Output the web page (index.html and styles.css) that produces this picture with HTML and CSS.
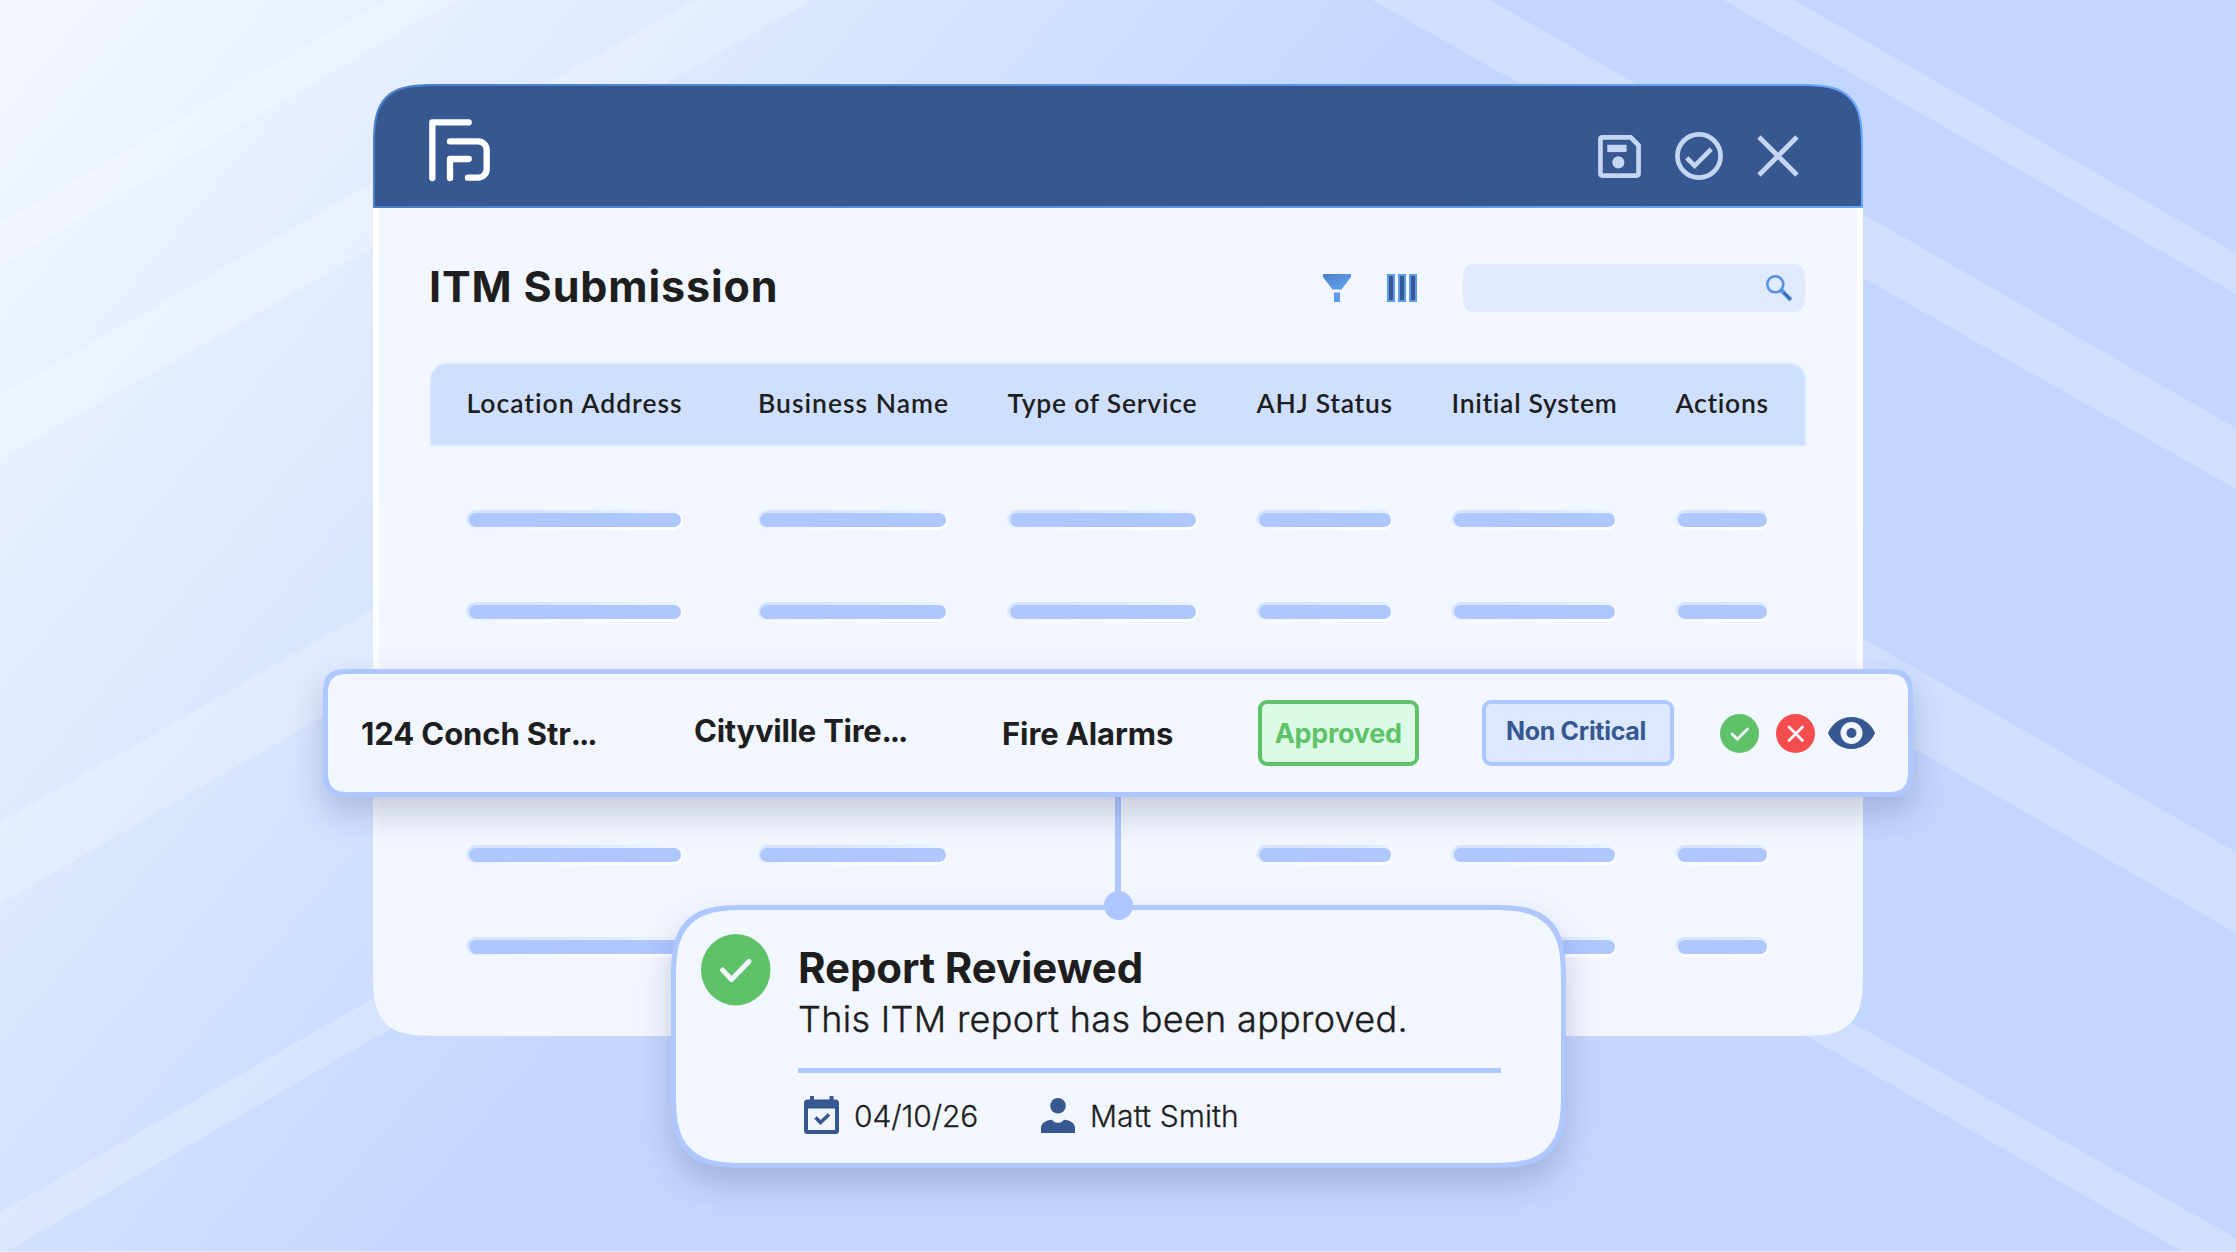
FILE: index.html
```html
<!DOCTYPE html>
<html lang="en">
<head>
<meta charset="utf-8">
<title>ITM Submission</title>
<link rel="stylesheet" href="styles.css">
</head>
<body>
<div class="stage">
  <svg class="stripes" viewBox="0 0 2236 1252" aria-hidden="true">
    <path d="M385 0H456L0 266V224ZM694 0H813L0 459V395ZM0 822L420 582V660L0 904ZM0 1212L440 960V1000L0 1255Z"/>
    <path d="M1372 0H1490L2236 428V489ZM1723 0H1794L2236 253V294ZM1800 602L2236 852V933L1800 683ZM1780 982L2236 1238V1252H2183L1780 1021Z"/>
  </svg>

  <main class="window">
    <header class="topbar">
      <svg class="logo" viewBox="208 147 182 186"><path d="M218 324V157H327M271 214H355A26 26 0 0 1 381 240V297A26 26 0 0 1 355 323H325M271 324V267H327"/></svg>
      <div class="topbar-actions">
        <svg class="icon-save" viewBox="0 0 44 44"><path class="line" d="M4.600 2.500H33.500L41.500 10.500V39.400Q41.500 41.500 39.400 41.500H4.600Q2.500 41.500 2.500 39.400V4.600Q2.500 2.500 4.600 2.500Z"/><path class="solid" d="M9.500 10H29.200V17.500H9.500Z"/><circle class="solid" cx="20.800" cy="28" r="6.200"/></svg>
        <svg class="icon-ok" viewBox="0 0 49 49"><circle class="line" cx="24.500" cy="24.500" r="22"/><path class="line" d="M12 26.500L20 34.500L37 17.500"/></svg>
        <svg class="icon-close" viewBox="0 0 42 42"><path class="line" d="M2 2L40 40M40 2L2 40"/></svg>
      </div>
    </header>

    <section class="body">
      <div class="toolbar">
        <h1 class="title">ITM Submission</h1>
        <svg class="icon-filter" viewBox="0 0 28 28"><defs><linearGradient id="f" x1="0" y1="0" x2="1" y2="1"><stop offset="0" stop-color="#4a7fc8"/><stop offset="1" stop-color="#66a5f7"/></linearGradient></defs><path fill="url(#f)" d="M0 0H28V3L18.500 15.500H9.500L0 3Z"/><path fill="#5f9bec" d="M11 18.500H17V28H11Z"/></svg>
        <svg class="icon-columns" viewBox="0 0 30 28"><path d="M1 1H7V27H1ZM12 1H18V27H12ZM23 1H29V27H23Z"/></svg>
        <div class="search">
          <svg class="icon-search" viewBox="0 0 26 26"><circle cx="9.300" cy="9.300" r="8"/><path class="handle" d="M15.500 15.500L25 25"/><path class="core" d="M18 18L24 24"/></svg>
        </div>
      </div>

      <div class="grid head">
        <span class="wide">Location Address</span><span class="wide">Business Name</span><span class="mid">Type of Service</span><span>AHJ Status</span><span>Initial System</span><span>Actions</span>
      </div>
      <div class="grid row"><i></i><i></i><i></i><i></i><i></i><i></i></div>
      <div class="grid row"><i></i><i></i><i></i><i></i><i></i><i></i></div>
      <div class="grid row after-gap"><i></i><i></i><b></b><i></i><i></i><i></i></div>
      <div class="grid row"><i></i><i></i><i></i><i></i><i></i><i></i></div>
    </section>
  </main>

  <div class="connector"></div>

  <section class="record">
    <span class="cell address">124 Conch Str<span class="dots">...</span></span>
    <span class="cell business">Cityville Tire<span class="dots">...</span></span>
    <span class="cell service">Fire Alarms</span>
    <span class="badge approved">Approved</span>
    <span class="badge noncritical">Non Critical</span>
    <div class="record-actions">
      <svg class="dot" viewBox="0 0 39 39"><circle cx="19.500" cy="19.500" r="19.500" fill="#5fc268"/><path d="M12 20L17.300 25.300L27.500 15"/></svg>
      <svg class="dot" viewBox="0 0 39 39"><circle cx="19.500" cy="19.500" r="19.500" fill="#f54d4d"/><path d="M13 13L26.500 26.500M26.500 13L13 26.500"/></svg>
      <svg class="eye" viewBox="0 0 47 32"><path fill="#36578f" d="M0 16C4 6.500 13 0 23.500 0S43 6.500 47 16C43 25.500 34 32 23.500 32S4 25.500 0 16Z"/><circle cx="23.500" cy="16" r="11" fill="#f2f6ff"/><circle cx="23.500" cy="16" r="5" fill="#36578f"/></svg>
    </div>
  </section>

  <section class="card">
    <svg class="card-check" viewBox="0 0 69.500 71.500"><ellipse cx="34.750" cy="35.750" rx="34.750" ry="35.750"/><path d="M21.500 36L30.500 45.500L48 27.500"/></svg>
    <div class="card-content">
      <h2 class="card-title">Report Reviewed</h2>
      <p class="card-text">This ITM report has been approved.</p>
      <div class="meta">
        <svg class="icon-calendar" viewBox="0 0 35 38"><path fill="#36578f" fill-rule="evenodd" d="M6 0H10V3.500H25.500V0H29.500V3.500H31.500Q35 3.500 35 7V34.500Q35 38 31.500 38H3.500Q0 38 0 34.500V7Q0 3.500 3.500 3.500H6ZM4 12.500V34H31V12.500Z"/><path fill="none" stroke="#36578f" stroke-width="3.600" d="M11.500 21.500L16.500 26.500L25 18.500"/></svg>
        <span class="date">04/10/26</span>
        <svg class="icon-person" viewBox="0 0 34 35"><circle cx="17" cy="7.800" r="7.800"/><path d="M0 35V30C0 25 5 22 11 21.700Q13 24.800 17 24.800T23 21.700C29 22 34 25 34 30V35Z"/></svg>
        <span class="person">Matt Smith</span>
      </div>
    </div>
  </section>
</div>
</body>
</html>
```

FILE: styles.css
```css
* { box-sizing: border-box; }

body { margin: 0; font-family: Inter, "Liberation Sans", sans-serif; color: #1e1e1e; }
svg { display: block; flex: none; overflow: visible; }

.stage {
  position: relative;
  width: 2236px;
  height: 1252px;
  padding: 84px 373px 0;
  overflow: hidden;
  background: linear-gradient(130deg, #f4f8ff 0%, #dfeaff 20%, #d0e0ff 33%, #c3d6ff 45%);
}
.stage::after { content: ""; position: absolute; left: 0; right: 0; bottom: 0; height: 1px; background: #e9f0ff; }
.stripes { position: absolute; inset: 0; width: 2236px; height: 1252px; fill: #fff; fill-opacity: .22; }

/* window */
.window { position: relative; height: 952px; display: flex; flex-direction: column; }
.topbar {
  height: 124px;
  flex: none;
  display: flex;
  justify-content: space-between;
  align-items: flex-start;
  padding: 33px 62.500px 0 54px;
  border: 2px solid transparent;
  border-radius: 42px 42px 0 0;
  background: linear-gradient(#36578f, #36578f) padding-box, linear-gradient(90deg, #4b80c8, #68a6fb) border-box;
}
.logo { width: 60.700px; height: 62px; fill: none; stroke: #fff; stroke-width: 19; stroke-linecap: round; stroke-linejoin: round; }
.topbar-actions { display: flex; align-items: center; gap: 34px; padding-top: 13px; }
.topbar-actions .line { fill: none; stroke: #c5d6f2; stroke-width: 4.800; }
.topbar-actions .solid { fill: #c5d6f2; }
.icon-save { width: 43px; height: 43px; }
.icon-ok { width: 48px; height: 48px; }
.icon-close { width: 42px; height: 42px; }

.body {
  flex: 1;
  padding: 56px 52px 0;
  border: solid transparent;
  border-width: 0 6px;
  border-radius: 0 0 42px 42px;
  background: linear-gradient(#f2f6ff, #f2f6ff) padding-box, linear-gradient(#fff 35%, #f2f6ff 85%) border-box;
}
.toolbar { height: 48px; display: flex; align-items: center; }
.title { margin: 0 auto 0 -2px; font-size: 43px; line-height: 48px; font-weight: 700; letter-spacing: .900px; position: relative; top: -2px; }
.icon-filter { width: 28px; height: 28px; margin-right: 36px; }
.icon-columns { width: 30px; height: 28px; margin-right: 46px; fill: #36578f; stroke: #5f9bec; stroke-width: 2; }
.search { width: 342px; height: 48px; border-radius: 11px; background: #dfeaff; display: flex; align-items: center; justify-content: flex-end; padding-right: 13.500px; }
.icon-search { width: 26px; height: 26px; fill: none; stroke: #5690e0; stroke-width: 2.600; }
.icon-search .handle { stroke-width: 4.200; }
.icon-search .core { stroke: #36578f; stroke-width: 1.500; }

.grid {
  display: grid;
  grid-template-columns: 291.500px 249.500px 249px 195px 224px 90px;
  justify-content: start;
  padding-left: 37.500px;
}
.head {
  height: 81.500px;
  margin-top: 51.500px;
  align-items: center;
  border-radius: 16px 16px 0 0;
  background: #cfe0ff;
  box-shadow: 0 0 0 1.500px #e4edff;
  font: 600 26.500px/32px Lato, "Open Sans", sans-serif;
  letter-spacing: .7px;
  white-space: nowrap;
}
.head span { position: relative; top: -1px; left: -2px; }
.head .wide { letter-spacing: 1px; }
.head .mid { letter-spacing: .75px; }
.row { height: 14px; margin-top: 78px; isolation: isolate; }
.head + .row { margin-top: 68px; }
.after-gap { margin-top: 229px; }
.row i { height: 14px; border-radius: 7px; background: #aec7ff; position: relative; }
.row i::before {
  content: "";
  position: absolute;
  inset: -3px -2px -3px -2.500px;
  z-index: -1;
  border-radius: 10px;
  background: linear-gradient(175deg, #d6e4ff 20%, #f2f6ff 55%, #fff 85%);
}
.row i:nth-child(1) { width: 212px; }
.row i:nth-child(2) { width: 186px; }
.row i:nth-child(3) { width: 186px; }
.row i:nth-child(4) { width: 132px; }
.row i:nth-child(5) { width: 161px; }
.row i:nth-child(6) { width: 89px; }

/* highlighted record over the table */
.record {
  position: absolute;
  z-index: 2;
  left: 323px;
  top: 669px;
  width: 1590px;
  height: 128px;
  display: flex;
  align-items: center;
  border: 5px solid #aec7ff;
  border-radius: 20px;
  background: #f2f6ff;
  box-shadow: 0 16px 32px rgba(40, 50, 90, .22);
  padding-left: 33px;
  white-space: nowrap;
}
.cell { font-size: 31px; font-weight: 700; line-height: 40px; letter-spacing: -.1px; padding-top: 1px; }
.dots { letter-spacing: -2.100px; }
.address { width: 333px; }
.business { width: 308px; padding: 0 0 5px; letter-spacing: -.25px; }
.service { width: 256px; }
.badge { height: 66px; display: flex; align-items: center; justify-content: center; border: 4px solid; border-radius: 9px; font-weight: 700; }
.approved { width: 160.500px; border-color: #5fc268; background: #dcfbe6; color: #5fc268; font-size: 27px; letter-spacing: -.3px; padding-top: 1px; }
.noncritical { width: 192px; margin-left: 63px; border-color: #aec7ff; background: #dbe8ff; color: #36578f; font-size: 25px; letter-spacing: -.3px; padding: 0 3px 5px 0; }
.record-actions { display: flex; align-items: center; margin-left: 46.500px; }
.dot { width: 39px; height: 39px; margin-right: 17px; fill: none; }
.dot path { stroke: #f2f6ff; stroke-width: 2.800; stroke-linecap: round; stroke-linejoin: round; }
.eye { width: 47px; height: 32px; margin-left: -4px; }

/* notification card */
.card {
  position: absolute;
  left: 671px;
  top: 905px;
  width: 894.500px;
  height: 263px;
  display: flex;
  align-items: flex-start;
  border: 5px solid #aec7ff;
  border-radius: 50px;
  background: #f2f6ff;
  box-shadow: 0 16px 32px rgba(40, 50, 90, .22);
  padding: 24px 0 0 24.500px;
}
.card-check { width: 69.500px; height: 71.500px; fill: #5fc268; }
.card-check path { fill: none; stroke: #f2f6ff; stroke-width: 5; stroke-linecap: round; stroke-linejoin: round; }
.card-content { width: 703px; margin-left: 28px; white-space: nowrap; }
.card-title { margin: 8px 0 0; font-size: 42px; line-height: 52px; font-weight: 700; letter-spacing: -.1px; }
.card-text { margin: 0; padding-top: 1px; height: 79px; font-size: 36px; line-height: 48px; font-weight: 300; letter-spacing: .32px; -webkit-text-stroke: .4px #1e1e1e; border-bottom: 5px solid #aec7ff; }
.meta { display: flex; align-items: center; height: 38px; margin-top: 23px; font-size: 30px; font-weight: 300; -webkit-text-stroke: .3px #1e1e1e; }
.meta span { padding-top: 1px; }
.icon-calendar { width: 35px; height: 38px; margin-left: 6px; margin-right: 15px; }
.icon-person { width: 34px; height: 35px; fill: #36578f; margin-right: 15px; }
.date { width: 187px; letter-spacing: -.1px; }
.person { letter-spacing: .1px; }

.connector { position: absolute; z-index: 1; left: 1115px; top: 797px; width: 6px; height: 108px; background: #aec7ff; }
.connector::after { content: ""; position: absolute; left: -11.500px; bottom: -15px; width: 29px; height: 29px; border-radius: 50%; background: #aec7ff; }

@supports (corner-shape: squircle) {
  .topbar { border-radius: 68px 68px 0 0; corner-shape: superellipse(1.75); }
  .body { border-radius: 0 0 68px 68px; corner-shape: superellipse(1.75); }
  .card { border-radius: 78px; corner-shape: superellipse(1.65); }
  .record { border-radius: 27px; corner-shape: superellipse(1.6); }
}
```
